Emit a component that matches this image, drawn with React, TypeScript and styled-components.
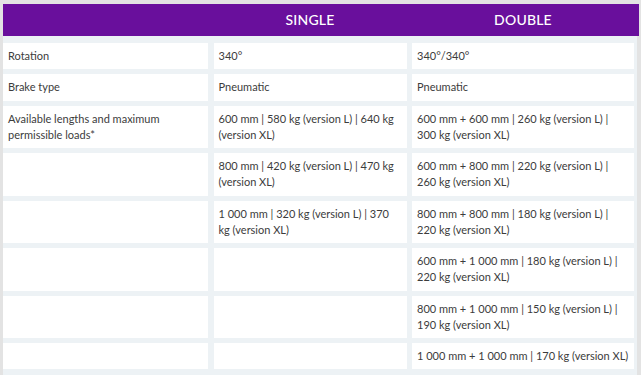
import React from "react";
import styled, { createGlobalStyle } from "styled-components";

const GlobalStyle = createGlobalStyle`
  html, body {
    margin: 0;
    padding: 0;
    background: #e3e3e3;
  }
  body {
    font-family: Lato, "Open Sans", Arial, sans-serif;
  }
`;

const COLUMNS = "205px 193px 222px";

const StyledPage = styled.div`
  padding: 4px 4px 0 3px;
  width: 641px;
  box-sizing: border-box;
`;

const StyledTable = styled.div`
  background: #edf2f5;
  width: 634px;
`;

const StyledHead = styled.div`
  display: grid;
  grid-template-columns: ${COLUMNS};
  column-gap: 5.5px;
  height: 32px;
  background: #690f9c;
  margin-right: -2px;
  padding-right: 2px;
`;

const StyledHeadCell = styled.div`
  display: flex;
  align-items: center;
  justify-content: center;
  color: #ffffff;
  font-size: 14px;
  font-weight: 500;
  letter-spacing: 0.2px;
  padding-bottom: 2px;
`;

const StyledBody = styled.div`
  display: grid;
  grid-template-columns: ${COLUMNS};
  column-gap: 5.5px;
  row-gap: 5px;
  padding: 7px 2px 6px 0;
`;

const StyledCell = styled.div`
  background: #ffffff;
  padding: 5px 5px;
  font-size: 11px;
  line-height: 16.25px;
  color: #3c3c3c;
`;

const NB = "\u00a0";

const rows: string[][] = [
  ["Rotation", "340°", "340°/340°"],
  ["Brake type", "Pneumatic", "Pneumatic"],
  [
    "Available lengths and maximum permissible loads*",
    "600 mm | 580 kg (version L) | 640 kg (version XL)",
    "600 mm + 600 mm | 260 kg (version L) | 300 kg (version XL)",
  ],
  [
    "",
    "800 mm | 420 kg (version L) | 470 kg (version XL)",
    "600 mm + 800 mm | 220 kg (version L) | 260 kg (version XL)",
  ],
  [
    "",
    `1${NB}000 mm | 320 kg (version L) | 370 kg (version XL)`,
    "800 mm + 800 mm | 180 kg (version L) | 220 kg (version XL)",
  ],
  ["", "", `600 mm + 1${NB}000 mm | 180 kg (version L) | 220 kg (version XL)`],
  ["", "", `800 mm + 1${NB}000 mm | 150 kg (version L) | 190 kg (version XL)`],
  ["", "", `1${NB}000 mm + 1${NB}000 mm | 170 kg (version XL)`],
];

const App = () => {
  return (
    <>
      <GlobalStyle />
      <StyledPage>
        <StyledTable>
          <StyledHead>
            <StyledHeadCell />
            <StyledHeadCell>SINGLE</StyledHeadCell>
            <StyledHeadCell>DOUBLE</StyledHeadCell>
          </StyledHead>
          <StyledBody>
            {rows.map((row, i) =>
              row.map((text, j) => (
                <StyledCell key={`${i}-${j}`}>{text || NB}</StyledCell>
              ))
            )}
          </StyledBody>
        </StyledTable>
      </StyledPage>
    </>
  );
};

export default App;
